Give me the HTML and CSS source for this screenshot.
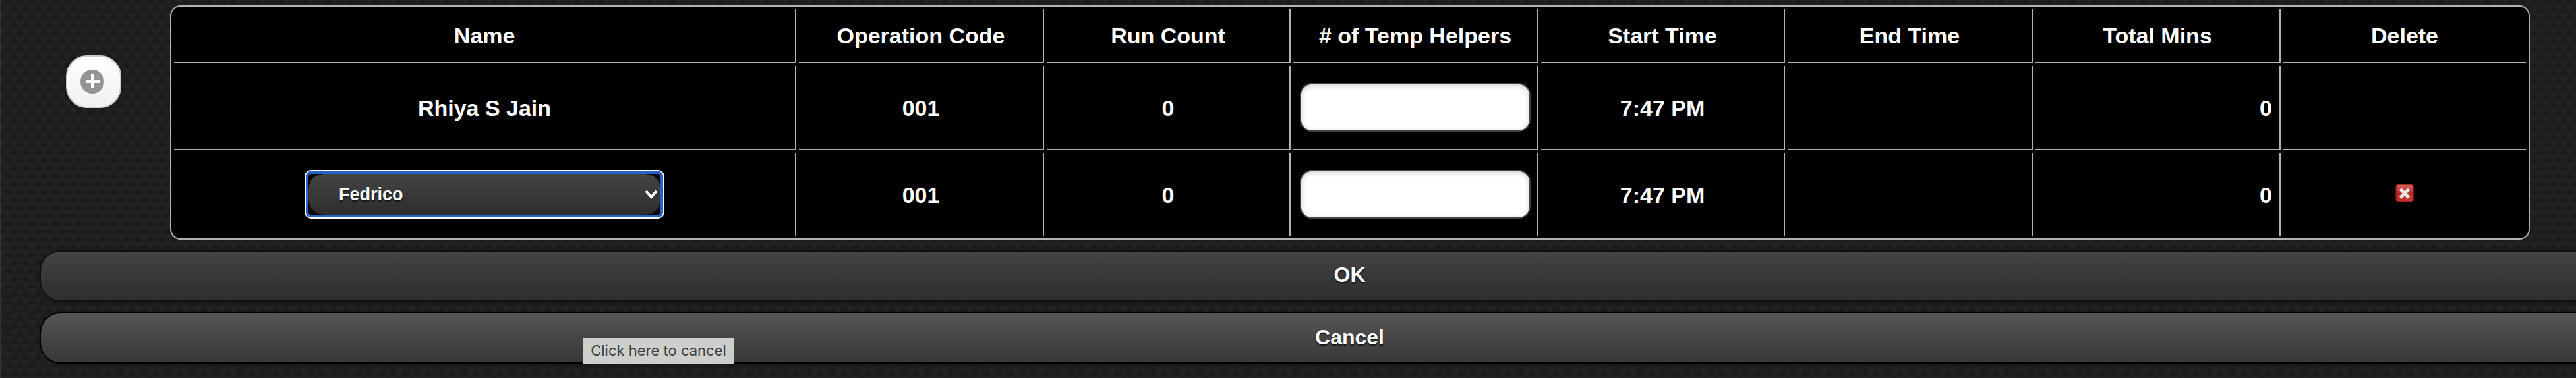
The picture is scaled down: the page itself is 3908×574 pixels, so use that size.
FILE: index.html
```html
<!DOCTYPE html>
<html lang="en">
<head>
  <meta charset="UTF-8">
  <title>Operators</title>
  <link rel="stylesheet" href="styles.css">
</head>
<body>
  <div class="page">
    <div class="top-row">
      <button class="add-btn" type="button" aria-label="Add">
        <svg width="36" height="36" viewBox="0 0 36 36">
          <circle cx="18" cy="18" r="18" fill="#949494"/>
          <path d="M16 7h5v8h8v5h-8v8h-5v-8H8v-5h8z" fill="#fff"/>
        </svg>
      </button>
      <table class="helpers">
        <colgroup>
          <col class="col-name"><col class="col-a"><col class="col-b"><col class="col-a">
          <col class="col-b"><col class="col-a"><col class="col-a"><col class="col-delete">
        </colgroup>
        <tr class="head">
          <th>Name</th>
          <th>Operation Code</th>
          <th>Run Count</th>
          <th># of Temp Helpers</th>
          <th>Start Time</th>
          <th>End Time</th>
          <th>Total Mins</th>
          <th>Delete</th>
        </tr>
        <tr class="row">
          <td>Rhiya S Jain</td>
          <td>001</td>
          <td>0</td>
          <td><input class="temp-input" type="text"></td>
          <td>7:47 PM</td>
          <td></td>
          <td class="mins">0</td>
          <td></td>
        </tr>
        <tr class="row last">
          <td>
            <div class="select-focus">
              <div class="select">
                <span>Fedrico</span>
                <svg width="20" height="14" viewBox="0 0 20 14">
                  <path d="M2 2l8 9 8-9" fill="none" stroke="#fff" stroke-width="4"/>
                </svg>
              </div>
            </div>
          </td>
          <td>001</td>
          <td>0</td>
          <td><input class="temp-input" type="text"></td>
          <td>7:47 PM</td>
          <td></td>
          <td class="mins">0</td>
          <td>
            <svg class="delete-icon" width="28" height="28" viewBox="0 0 28 28">
              <defs>
                <linearGradient id="red" x1="0" y1="0" x2="0" y2="1">
                  <stop offset="0" stop-color="#d96462"/>
                  <stop offset="0.5" stop-color="#b22a26"/>
                  <stop offset="1" stop-color="#cc342e"/>
                </linearGradient>
              </defs>
              <rect x="1" y="1" width="26" height="26" rx="4" fill="url(#red)" stroke="#8a1c18" stroke-width="1.5"/>
              <path d="M7.5 8l13 13M20.500 8L7.500 21" stroke="#e6e6e6" stroke-width="5"/>
            </svg>
          </td>
        </tr>
      </table>
    </div>
    <button class="btn" type="button">OK</button>
    <button class="btn btn-hover" type="button">Cancel</button>
  </div>
  <div class="tooltip">Click here to cancel</div>
</body>
</html>
```
FILE: styles.css
```css
* {
  box-sizing: border-box;
}

body {
  margin: 0;
  height: 574px;
  overflow: hidden;
  border-left: 1px solid #333;
  background-color: #202020;
  /* carbon weave */
  background-image:
    radial-gradient(ellipse 8px 7px at 50% 50%, #191919, transparent),
    radial-gradient(ellipse 8px 7px at 50% 50%, #191919, transparent),
    radial-gradient(ellipse 8px 6px at 50% 50%, #272727, transparent),
    radial-gradient(ellipse 8px 6px at 50% 50%, #272727, transparent);
  background-size: 18px 24px;
  background-position: 12px 4px, 3px 16px, 3px 22px, 12px 10px;
  font-family: "Liberation Sans", Arial, Helvetica, sans-serif;
  font-weight: bold;
  color: #fff;
}

.page {
  width: 3977px;
  margin-left: 59px;
  padding-top: 8px;
}

.top-row {
  display: flex;
  align-items: flex-start;
  padding-left: 40px;
}

.add-btn {
  display: flex;
  align-items: center;
  width: 84px;
  height: 80px;
  margin: 76px 74px 0 0;
  padding: 0 0 0 20px;
  border: 2px solid #c8c8c8;
  border-radius: 32px;
  background: linear-gradient(#fff, #f1f1f1);
  box-shadow: 0 2px 8px rgba(0, 0, 0, 0.3);
}

.helpers {
  width: 3580px;
  table-layout: fixed;
  border: 2px solid #b3b3b3;
  border-radius: 16px;
  border-collapse: separate;
  border-spacing: 4px;
  background: #000;
  font-size: 34px;
}

.col-name {
  width: 944px;
}

.col-a {
  width: 372px;
}

.col-b {
  width: 370px;
}

.col-delete {
  width: 368px;
}

th,
td {
  padding: 0 10px;
  border-right: 2px solid #b3b3b3;
  border-bottom: 2px solid #b3b3b3;
  line-height: 40px;
  text-align: center;
  vertical-align: middle;
}

th:last-child,
td:last-child {
  border-right: none;
}

.head th {
  height: 82px;
}

.row td {
  height: 128px;
  padding-top: 1px;
}

.last td {
  height: 126px;
  border-bottom: none;
}

.row .mins {
  padding-right: 11px;
  text-align: right;
}

.temp-input {
  display: block;
  width: 350px;
  height: 74px;
  margin: -1px 0 0;
  border: 2px solid #444;
  border-radius: 18px;
  background: #fff;
  box-shadow: inset 0 2px 8px rgba(0, 0, 0, 0.2);
}

.select-focus {
  width: 546px;
  margin: -1px auto 0;
  border: 2px solid #fff;
  border-radius: 10px;
  background: #2563c9;
}

.select {
  display: flex;
  justify-content: space-between;
  align-items: center;
  height: 70px;
  padding: 0 4px 0 46px;
  border: 4px solid #2563c9;
  border-radius: 8px;
  font-size: 27px;
  /* dark corners left by the rounded button inside the focus ring */
  background:
    radial-gradient(circle at 100% 100%, transparent 21px, #080808 22px) 0 0 / 22px 22px no-repeat,
    radial-gradient(circle at 0 100%, transparent 21px, #080808 22px) 100% 0 / 22px 22px no-repeat,
    radial-gradient(circle at 100% 0, transparent 21px, #080808 22px) 0 100% / 22px 22px no-repeat,
    radial-gradient(circle at 0 0, transparent 21px, #080808 22px) 100% 100% / 22px 22px no-repeat,
    linear-gradient(#444, #2d2d2d);
  text-shadow: 0 2px 2px #111;
}

.delete-icon {
  display: block;
  margin: 0 auto 6px;
}

.btn {
  display: block;
  width: 3977px;
  height: 78px;
  margin-top: 16px;
  padding: 0 2px 3px 0;
  border: 2px solid #111;
  border-radius: 32px;
  background: linear-gradient(#444, #2d2d2d);
  box-shadow: 0 2px 8px rgba(0, 0, 0, 0.3);
  color: #fff;
  font: bold 32px "Liberation Sans", Arial, sans-serif;
  text-shadow: 0 2px 2px #111;
}

.btn-hover {
  padding-bottom: 2px;
  border-color: #000;
  background: linear-gradient(#555, #383838);
}

/* sits over the Cancel button */
.tooltip {
  position: absolute;
  left: 884px;
  top: 514px;
  width: 230px;
  height: 38px;
  background: #cdcfcd;
  color: #3d3f3d;
  font: 22px/36px Inter, sans-serif;
  text-align: center;
  white-space: nowrap;
}
```
